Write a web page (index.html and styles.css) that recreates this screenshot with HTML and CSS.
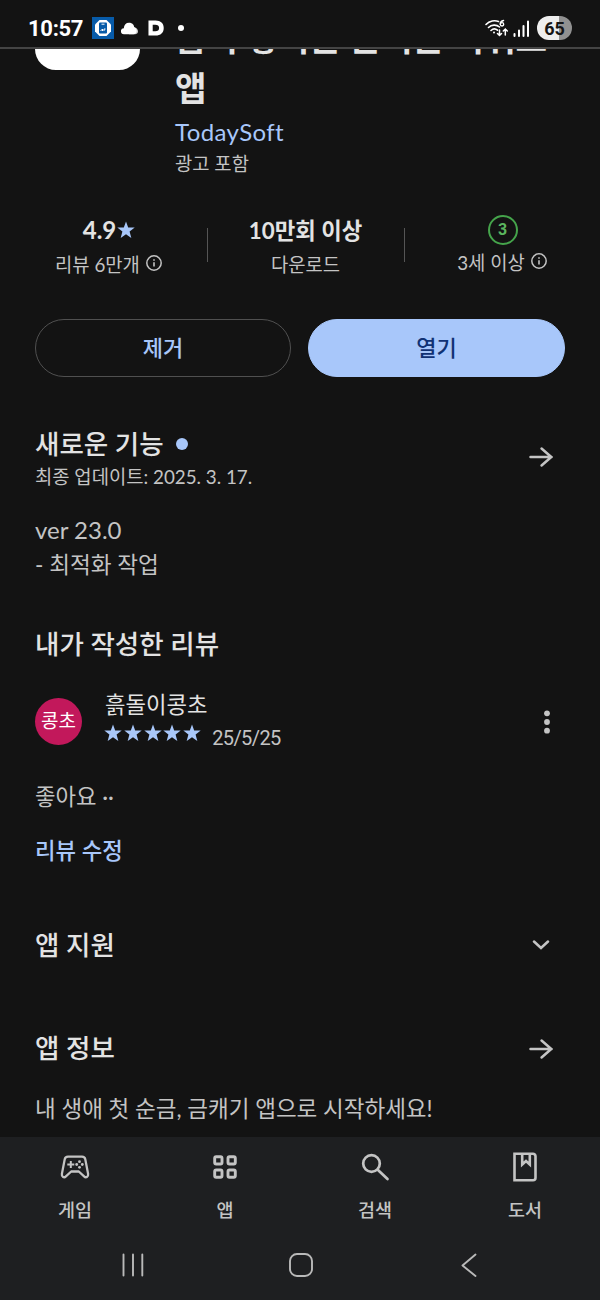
FILE: index.html
```html
<!DOCTYPE html>
<html lang="ko">
<head>
<meta charset="utf-8">
<title>앱 상세</title>
<link rel="stylesheet" href="styles.css">
</head>
<body>
<svg class="defs" width="0" height="0">
  <symbol id="star" viewBox="0 0 24 24"><path d="M12 .5l2.900 8 8.700.3-6.800 5.300 2.300 8.400L12 17.700l-7.100 4.800 2.300-8.400L.4 8.800l8.700-.3z"/></symbol>
  <symbol id="info" viewBox="0 0 18 18"><circle cx="9" cy="9" r="7.200" fill="none" stroke="currentColor" stroke-width="1.500"/><path d="M9 8.200v4.300M9 5.200v1.600" fill="none" stroke="currentColor" stroke-width="1.600"/></symbol>
  <symbol id="arrow" viewBox="0 0 24 24"><path d="M2.300 12h19.500M12.500 4.200L21.500 12l-9 7.800" fill="none" stroke="currentColor" stroke-width="2.300" stroke-linecap="round" stroke-linejoin="round"/></symbol>
</svg>
<div class="screen">
  <header class="status">
    <span class="clock">10:57</span>
    <svg class="app-badge" viewBox="0 0 22 22"><path fill="#075ba9" d="M0 0h22v22H0z"/><path fill="#fff" d="M7.500 3h7L19 7.500v7L14.500 19h-7L3 14.500v-7z"/><rect x="7" y="5.500" width="8" height="11" rx="1" fill="#075ba9"/><path d="M9.500 7.200h3M8.500 14l2-2v2M12 14v-2h1.500" stroke="#fff" fill="none"/></svg>
    <svg class="cloud" viewBox="0 0 17 13"><path fill="#ccc" d="M10 4.500c4 0 7 2 7 5 0 1.700-1.400 2.800-3 2.800H8z"/><path fill="#fff" d="M3 12.300a3 3 0 0 1-.2-6C3 2.800 5 .8 8 .8c3.500 0 5 2.200 5.200 4.600 1.800.4 2.500 1.700 2.500 3.300 0 2.200-1.500 3.600-3.300 3.600z"/></svg>
    <svg class="d-icon" viewBox="0 0 17 17"><path fill="#fff" fill-rule="evenodd" d="M.5.5H8c5.500 0 8.700 3 8.700 8s-3.200 8-8.700 8H.5zM5 5v7h2.800c2.500 0 4-1 4-3.500S10.300 5 7.800 5z"/></svg>
    <i class="more-dot"></i>
    <div class="status-right">
      <svg class="wifi" viewBox="0 0 23 18" fill="none" stroke="#fff" stroke-width="1.600" stroke-linecap="round"><path d="M1 5.500C4.500 1.500 10 1 13.500 2.500M3.500 8.500c3-3 8-3.200 11-.5M6 11.500c2-2 4.500-2.100 6.500-.3"/><circle cx="9" cy="13.500" r="1" fill="#fff" stroke="none"/><path d="M18.500 1.500C16 2 15.200 3.500 15.300 5.200M14.500 11v5.500m-2-2l2 2 2-2M20.300 16V10m-2 2l2-2 2 2" stroke-width="1.500"/><circle cx="17" cy="5.300" r="1.700" stroke-width="1.300"/></svg>
      <svg class="signal" viewBox="0 0 16 17"><path d="M1.500 14v2M6 10.500V16M10.500 6v10M15 1.500V16" stroke="#fff" stroke-width="2" stroke-linecap="round"/></svg>
      <div class="battery">65</div>
    </div>
  </header>
  <main>
    <section class="hero">
      <div class="logo"></div>
      <div class="hero-text">
        <h1>금이 쌓이는 돈버는 리워드 앱</h1>
        <a class="dev">TodaySoft</a>
        <p class="ads">광고 포함</p>
      </div>
    </section>
    <section class="stats">
      <div class="stat"><div class="value"><span class="rating">4.9</span><svg><use href="#star"/></svg></div><div class="label"><span>리뷰 6만개</span><svg><use href="#info"/></svg></div></div>
      <div class="stat"><div class="value downloads"><span>10만회 이상</span></div><div class="label"><span>다운로드</span></div></div>
      <div class="stat age"><div class="value"><b class="age-mark">3</b></div><div class="label"><span>3세 이상</span><svg><use href="#info"/></svg></div></div>
    </section>
    <section class="actions"><button class="remove">제거</button><button class="open">열기</button></section>
    <section class="news">
      <div class="news-head"><div><h2>새로운 기능<i class="dot"></i></h2><p class="updated">최종 업데이트: 2025. 3. 17.</p></div><svg class="arrow"><use href="#arrow"/></svg></div>
      <p class="body"><span class="version">ver 23.0</span><br>- 최적화 작업</p>
    </section>
    <section class="review">
      <h2>내가 작성한 리뷰</h2>
      <div class="reviewer">
        <div class="avatar">콩초</div>
        <div class="who"><div class="name">흙돌이콩초</div><div class="score"><span class="stars"><svg><use href="#star"/></svg><svg><use href="#star"/></svg><svg><use href="#star"/></svg><svg><use href="#star"/></svg><svg><use href="#star"/></svg></span><span class="date">25/5/25</span></div></div>
        <svg class="kebab" viewBox="0 0 8 24"><circle cx="4" cy="3.300" r="2.900"/><circle cx="4" cy="12" r="2.900"/><circle cx="4" cy="20.700" r="2.900"/></svg>
      </div>
      <p class="comment">좋아요 ··</p>
      <a class="edit">리뷰 수정</a>
    </section>
    <section class="row support"><h2>앱 지원</h2><svg class="chevron" viewBox="0 0 18 10"><path d="M2 1.500l7 6.500 7-6.500" fill="none" stroke="currentColor" stroke-width="2.500" stroke-linecap="round"/></svg></section>
    <section class="row about"><h2>앱 정보</h2><svg class="arrow"><use href="#arrow"/></svg></section>
    <p class="summary">내 생애 첫 순금, 금캐기 앱으로 시작하세요!</p>
  </main>
  <footer>
    <nav class="tabs">
      <a><svg viewBox="0 0 30 30" fill="none" stroke="currentColor" stroke-width="2.300" stroke-linejoin="round"><path d="M8 4.700h14c1.800 0 3 1 3.300 2.700l2.800 14.500c.5 3-2.200 4.300-4 2.500L18.800 19.500h-7.600L5.900 24.400c-1.800 1.800-4.500.5-4-2.500L4.700 7.400C5 5.700 6.200 4.700 8 4.700z"/><path d="M10.800 9v7M7.300 12.500h7" stroke-width="2"/><g fill="currentColor" stroke="none"><circle cx="19.500" cy="9.700" r="1.400"/><circle cx="19.500" cy="15.300" r="1.400"/><circle cx="16.700" cy="12.500" r="1.400"/><circle cx="22.300" cy="12.500" r="1.400"/></g></svg><span>게임</span></a>
      <a><svg viewBox="0 0 30 30" fill="none" stroke="currentColor" stroke-width="2.900"><rect x="4.700" y="4.700" width="7.300" height="7.300" rx="1.500"/><rect x="18" y="4.700" width="7.300" height="7.300" rx="1.500"/><rect x="4.700" y="18" width="7.300" height="7.300" rx="1.500"/><rect x="18" y="18" width="7.300" height="7.300" rx="1.500"/></svg><span>앱</span></a>
      <a><svg viewBox="0 0 30 30" fill="none" stroke="currentColor" stroke-width="2.700" stroke-linecap="round"><circle cx="11.500" cy="11.500" r="8.300"/><path d="M17.700 17.700l9.800 9.300"/></svg><span>검색</span></a>
      <a><svg viewBox="0 0 30 30" fill="none" stroke="currentColor" stroke-width="2.600"><path d="M4.500 1.800H23a2.500 2.500 0 0 1 2.500 2.500v21.500a2.500 2.500 0 0 1-2.500 2.500H4.500z"/><path d="M12.200 2v10.500l3.800-3.500 3.800 3.500V2"/></svg><span>도서</span></a>
    </nav>
    <div class="system">
      <svg viewBox="0 0 26 26"><path d="M3.500 2.500v21M13 2.500v21M22.300 2.500v21"/></svg>
      <svg viewBox="0 0 26 26"><rect x="2" y="2" width="22" height="22" rx="7"/></svg>
      <svg viewBox="0 0 26 26"><path d="M19.500 2.500L6.500 13.500l13 10.500"/></svg>
    </div>
  </footer>
</div>
</body>
</html>
```
FILE: styles.css
```css
* { box-sizing: border-box; margin: 0; padding: 0; }
body { background: #131313; }
.defs { display: block; position: absolute; }
.screen { width: 600px; height: 1300px; overflow: hidden; display: flex; flex-direction: column; background: #131313; color: #c4c4c4; font-family: Lato, "Noto Sans CJK KR", sans-serif; white-space: nowrap; }
svg { display: block; flex: none; }
h1, h2 { color: #e3e3e3; font-weight: 500; }
.status { height: 49px; flex: none; border-bottom: 2px solid #444; padding: 9px 28px 0; display: flex; align-items: center; color: #fff; }
.clock { width: 64px; font: 700 22px Roboto, sans-serif; letter-spacing: -.3px; }
.app-badge { width: 22px; height: 22px; }
.cloud { width: 17px; height: 13px; margin-left: 7px; }
.d-icon { width: 16px; height: 16px; margin-left: 10px; }
.more-dot { width: 6px; height: 6px; border-radius: 50%; background: #fff; margin-left: 14px; }
.status-right { margin-left: auto; display: flex; align-items: center; }
.wifi { width: 23px; height: 18px; }
.signal { width: 16px; height: 17px; margin-left: 5px; }
.battery { width: 35px; height: 24px; border-radius: 12px; margin-left: 8px; background: linear-gradient(90deg, #eee 64%, #919191 64%); color: #151515; font: 700 18px/25px Roboto, sans-serif; text-align: center; }
main { height: 1088px; flex: none; overflow: hidden; padding: 0 35px; }
.hero { height: 151px; display: flex; }
.logo { flex: none; width: 105px; height: 105px; margin-top: -84px; border-radius: 21px; background: #fff; }
.hero-text { flex: none; width: 390px; margin-left: 35px; margin-top: -36px; display: flex; flex-direction: column; }
h1 { font-size: 34.3px; line-height: 50px; white-space: normal; font-weight: 700; width: 385px; }
.dev { font-size: 24px; line-height: 30px; margin-top: 4px; color: #a8c7fa; letter-spacing: .4px; }
.ads { font-size: 18.8px; line-height: 30px; margin-top: 2px; }
.stats { height: 119px; margin: 0 -20px; display: grid; grid-template-columns: 192px 197px 181px; padding-top: 11px; }
.stat { height: 68px; display: flex; flex-direction: column; align-items: center; position: relative; }
.stat:first-child { padding-right: 4px; }
.stat + .stat::before { content: ""; position: absolute; left: 0; top: 17px; width: 1px; height: 34px; background: #555; }
.value { height: 38px; display: flex; align-items: center; color: #e3e3e3; font-size: 22.3px; font-weight: 700; }
.downloads { padding-bottom: 2px; }
.rating { font-size: 24px; line-height: 34px; }
.value svg { width: 18px; height: 18px; fill: #a8c7fa; margin-left: 1px; }
.label { height: 28px; display: flex; align-items: center; font-size: 18.8px; gap: 5px; }
.label svg { width: 18px; height: 18px; }
.age { padding-left: 16px; }
.age .label { margin-top: -2px; }
.age-mark { width: 30px; height: 30px; border: 2px solid #45a44b; border-radius: 50%; color: #5bb65f; text-align: center; font: 700 16px/26px Roboto, sans-serif; }
.actions { height: 58px; display: grid; grid-template-columns: 256px 257px; gap: 17px; }
button { border-radius: 29px; border: 1.500px solid #505050; background: none; color: #a8c7fa; font: 500 22px/50px Lato, "Noto Sans CJK KR", sans-serif; }
button.open { background: #a8c7fa; border-color: #a8c7fa; color: #103274; }
h2 { font-size: 26.5px; line-height: 38px; }
.news { height: 248px; padding-top: 48px; }
.news-head { display: flex; justify-content: space-between; }
.dot { display: inline-block; width: 12px; height: 12px; border-radius: 50%; background: #a8c7fa; margin-left: 12px; vertical-align: 4px; }
.updated { font-size: 18.8px; line-height: 28px; }
.arrow { width: 26px; height: 26px; margin: 19px 11px 0 0; }
.body { font-size: 22.600px; line-height: 34px; margin-top: 22px; }
.version { font-size: 24px; }
.review { height: 301px; }
.reviewer { display: flex; height: 70px; margin-top: 20px; align-items: flex-start; }
.avatar { width: 47px; height: 47px; border-radius: 50%; background: #c2185b; color: #fff; text-align: center; font-size: 19px; line-height: 46px; margin-top: 15px; }
.who { margin-left: 22px; padding-top: 3px; }
.name { color: #e3e3e3; font-size: 22.300px; line-height: 38px; padding-left: 1px; }
.score { display: flex; align-items: flex-start; }
.stars { display: flex; gap: 1.8px; }
.stars svg { width: 18px; height: 18px; fill: #a8c7fa; }
.date { font: 20px/26px Roboto, sans-serif; letter-spacing: -.6px; margin: 1px 0 0 11px; }
.kebab { width: 8px; height: 24px; margin: 27px 14px 0 auto; fill: #c4c4c4; }
.comment { font-size: 22.300px; line-height: 34px; margin-top: 27px; }
.edit { display: block; font-size: 22.300px; line-height: 34px; margin-top: 20px; color: #a8c7fa; font-weight: 500; }
.row { display: flex; justify-content: space-between; }
.support { height: 103px; }
.chevron { width: 18px; height: 10px; margin: 14px 15px 0 0; }
.about { height: 63px; }
.about .arrow { margin-top: 7px; }
.summary { font-size: 22.500px; line-height: 34px; }
footer { height: 163px; background: #1e1f21; flex: none; }
.tabs { display: grid; grid-template-columns: repeat(4, 150px); height: 93px; padding-top: 15px; }
.tabs a { display: flex; flex-direction: column; align-items: center; font-size: 18.500px; line-height: 28px; font-weight: 500; gap: 14px; }
.tabs svg { width: 30px; height: 30px; }
.system { display: flex; justify-content: space-between; padding: 22px 118px 0 120px; }
.system svg { width: 26px; height: 26px; fill: none; stroke: #b9b9b9; stroke-width: 1.900; stroke-linecap: round; stroke-linejoin: round; }
```
